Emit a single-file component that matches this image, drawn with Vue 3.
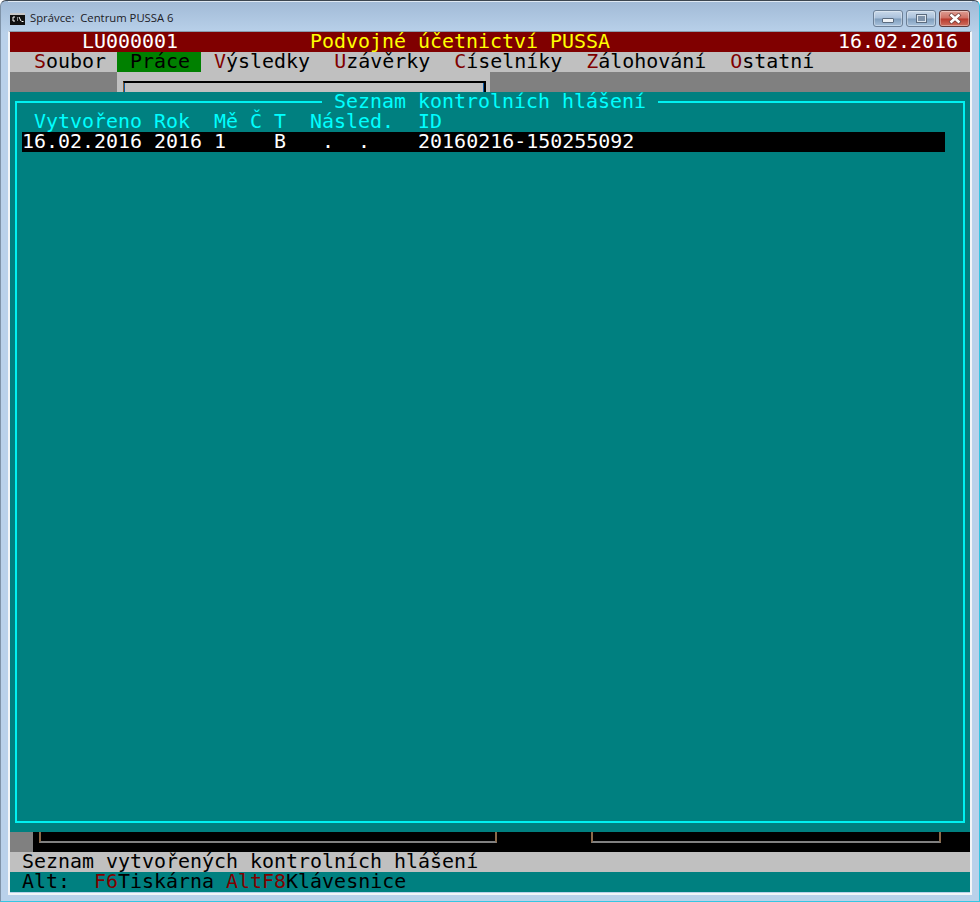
<script setup>
const menu = [
  { key: 'S', rest: 'oubor' },
  { key: 'P', rest: 'ráce', active: true },
  { key: 'V', rest: 'ýsledky' },
  { key: 'U', rest: 'závěrky' },
  { key: 'Č', rest: 'íselníky' },
  { key: 'Z', rest: 'álohování' },
  { key: 'O', rest: 'statní' }
]

const caption = 'Správce:  Centrum PUSSA 6'

// sloupce jako v textovem rezimu, mezery jsou zamerne
const header = ' Vytvořeno Rok  Mě Č T  Násled.  ID'
const rows = ['16.02.2016 2016 1    B   .  .    20160216-150255092']
const altLabel = 'Alt:  '
</script>

<template>
  <div class="window">
    <div class="titlebar">
      <svg class="app-icon" width="15" height="12" viewBox="0 0 15 12">
        <rect width="15" height="12" fill="#111" />
        <rect x="0" y="0" width="15" height="2" fill="#c8c8c8" />
        <path d="M5 4H3v4h2M7 5h1M7 7h1M9 4l2 4M11.500 8.500h2" fill="none" stroke="#fff" stroke-width="1" />
      </svg>
      <span class="caption">{{ caption }}</span>
      <div class="buttons">
        <div class="btn">
          <span class="min-glyph"></span>
        </div>
        <div class="btn">
          <span class="max-glyph"></span>
        </div>
        <div class="btn close">
          <svg width="16" height="11" viewBox="0 0 16 11">
            <path d="M3 1l10 9M13 1L3 10" stroke="#6b3a36" stroke-width="4" fill="none" />
            <path d="M3.500 1.500l9 8M12.500 1.500l-9 8" stroke="#fff" stroke-width="2.600" fill="none" />
          </svg>
        </div>
      </div>
    </div>

    <div class="console">
      <div class="row title-row">
        <span class="user">LU000001</span>
        <span class="app-name">Podvojné účetnictví PUSSA</span>
        <span class="date">16.02.2016</span>
      </div>

      <div class="row menu">
        <span v-for="item in menu" :key="item.key" class="menu-item" :class="{ active: item.active }"><span class="hot" v-if="!item.active">{{ item.key }}</span><template v-else>{{ item.key }}</template>{{ item.rest }}</span>
      </div>

      <div class="row under-menu">
        <div class="under-left"></div>
        <div class="under-mid">
          <div class="under-box"></div>
        </div>
      </div>

      <div class="panel">
        <fieldset class="frame">
          <legend>Seznam kontrolních hlášení</legend>
          <div class="list-head">{{ header }}</div>
          <div v-for="row in rows" :key="row" class="list-row">{{ row }}</div>
        </fieldset>
      </div>

      <div class="row under-bottom">
        <div class="bottom-left"></div>
        <div class="bottom-box first"></div>
        <div class="bottom-box second"></div>
      </div>

      <div class="row status">Seznam vytvořených kontrolních hlášení</div>
      <div class="row keys">{{ altLabel }}<span class="hot">F6</span>Tiskárna <span class="hot">AltF8</span>Klávesnice</div>
    </div>
  </div>
</template>

<style>
html,
body {
  margin: 0;
  background: #fff;
}
</style>

<style scoped>
.window {
  box-sizing: border-box;
  width: 980px;
  height: 902px;
  padding: 0 7px 7px 7px;
  border: 1px solid #35c6e2;
  border-top-color: #3c4650;
  border-left-color: #7f93a8;
  border-radius: 6px 6px 0 0;
  background: linear-gradient(#a1bad6 0, #b9d1ea 32px);
  overflow: hidden;
}

.titlebar {
  display: flex;
  align-items: flex-start;
  height: 30px;
  padding-left: 2px;
  box-shadow: inset 0 1px 0 #dfe9f3;
}

.app-icon {
  margin-top: 12px;
}

.caption {
  margin: 9px 0 0 5px;
  font-family: "Open Sans", sans-serif;
  font-size: 11.300px;
  line-height: 16px;
  color: #1c2026;
  white-space: pre;
}

.buttons {
  display: flex;
  gap: 3px;
  margin: 9px 0 0 auto;
  padding-right: 2px;
}

.btn {
  box-sizing: border-box;
  display: flex;
  align-items: center;
  justify-content: center;
  width: 30px;
  height: 17px;
  border: 1px solid #6b7f96;
  border-radius: 3px;
  background: linear-gradient(#c9d9ea 0, #a9c0da 48%, #7f9dbc 52%, #a8c2dc 100%);
  box-shadow: inset 0 0 0 1px rgba(255, 255, 255, 0.35);
}

.btn.close {
  width: 31px;
  border-color: #5f3a3a;
  background: linear-gradient(#dd9d93 0, #cf6e62 48%, #b8392c 52%, #cf6f5f 100%);
}

.min-glyph {
  display: block;
  width: 10px;
  height: 3px;
  margin-top: 4px;
  border: 1px solid #5b6b7e;
  border-radius: 1px;
  background: #eef2f6;
}

.max-glyph {
  box-sizing: border-box;
  display: block;
  width: 11px;
  height: 9px;
  border: 2px solid #dfe7ef;
  outline: 1px solid #5b6b7e;
  outline-offset: -1px;
  background: #7f93aa;
}

.console {
  box-sizing: border-box;
  width: 964px;
  height: 864px;
  border: 2px solid #f2f5f8;
  border-top: 1px solid #8b9bab;
  font-family: "DejaVu Sans Mono", monospace;
  font-size: 19.940px;
  line-height: 18px;
  white-space: pre;
}

.row {
  height: 20px;
}

.title-row {
  display: flex;
  background: #800000;
  color: #fff;
}

.user {
  margin-left: 72px;
}

.app-name {
  margin-left: 132px;
  color: #ffff00;
}

.date {
  margin-left: auto;
  margin-right: 12px;
}

.menu {
  display: flex;
  padding-left: 12px;
  background: #c0c0c0;
  color: #000;
}

.menu-item {
  padding: 0 12px;
}

.menu-item.active {
  margin: 0 1px 0 -1px;
  padding: 0 11px 0 13px;
  background: #008000;
}

.hot {
  color: #800000;
}

.under-menu {
  display: flex;
  background: #808080;
}

.under-left {
  width: 107px;
}

.under-mid {
  box-sizing: border-box;
  width: 373px;
  padding: 9px 4px 0 6px;
  background: #c0c0c0;
}

.under-box {
  box-sizing: border-box;
  height: 11px;
  border: 2px solid #000;
  border-bottom: 0;
  border-left: 1px solid #8a5a2a;
  box-shadow: inset 1px 0 0 #0a5aa8, inset -1px 0 0 #0a5aa8;
}

.panel {
  box-sizing: border-box;
  height: 740px;
  padding: 0 5px 9px;
  background: #008080;
}

.frame {
  box-sizing: border-box;
  height: 731px;
  min-width: 0;
  margin: 0;
  padding: 0;
  border: 2px solid #00f2f2;
}

legend {
  height: 20px;
  margin-left: 305px;
  padding: 0 12px;
  color: #00ffff;
}

.list-head {
  height: 20px;
  margin-left: 5px;
  color: #00ffff;
}

.list-row {
  height: 20px;
  margin: 0 18px 0 5px;
  background: #000;
  color: #fff;
}

.under-bottom {
  display: flex;
  background: #000;
}

.bottom-left {
  width: 23px;
  background: #808080;
}

.bottom-box {
  box-sizing: border-box;
  height: 11px;
  border: 2px solid #808080;
  border-top: 0;
  border-left-color: #8a6a4a;
  border-right-color: #8a6a4a;
}

.bottom-box.first {
  width: 458px;
  margin-left: 6px;
}

.bottom-box.second {
  width: 350px;
  margin-left: 94px;
}

.status {
  padding-left: 12px;
  background: #c0c0c0;
  color: #000;
}

.keys {
  padding-left: 12px;
  background: #008080;
  color: #000;
}
</style>
